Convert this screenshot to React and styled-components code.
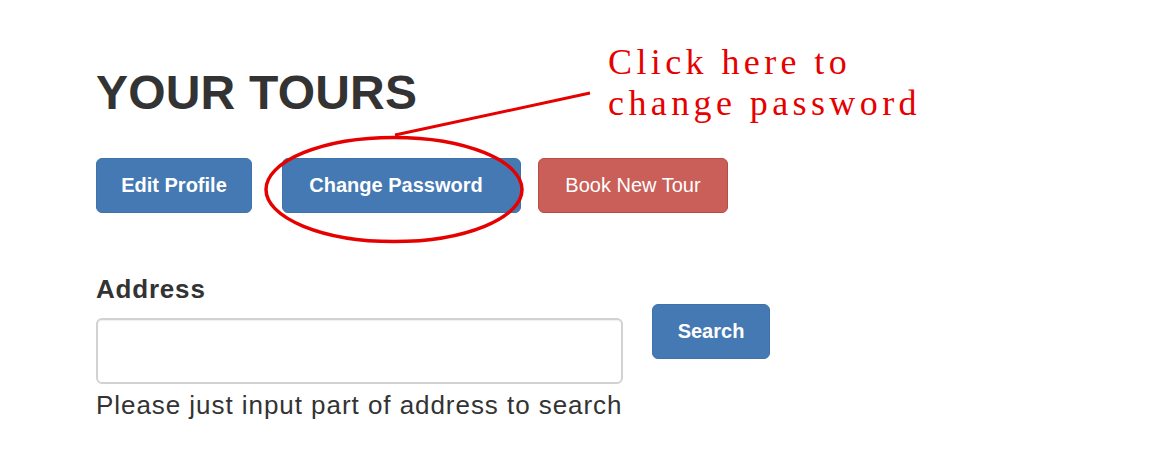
import styled, { createGlobalStyle } from 'styled-components';

const GlobalStyle = createGlobalStyle`
  html, body {
    margin: 0;
    padding: 0;
    background: #ffffff;
  }
  body {
    font-family: 'Liberation Sans', Arial, sans-serif;
    color: #333333;
  }
`;

const Page = styled.div`
  position: relative;
  width: 1164px;
  height: 450px;
  padding: 66px 0 0 96px;
  box-sizing: border-box;
  overflow: hidden;
`;

const Title = styled.h1`
  margin: 0;
  font-size: 48px;
  line-height: 53px;
  font-weight: 700;
  letter-spacing: 0.2px;
  color: #333333;
`;

const ButtonRow = styled.div`
  display: flex;
  margin-top: 39px;
`;

const Button = styled.button`
  display: inline-flex;
  align-items: center;
  justify-content: center;
  box-sizing: border-box;
  height: 55px;
  width: ${p => p.$w}px;
  margin-left: ${p => p.$gap || 0}px;
  padding: 0 ${p => p.$shift || 0}px 1px 0;
  border-radius: 6px;
  border: 1px solid ${p => (p.$danger ? '#b94a45' : '#3f72aa')};
  background: ${p => (p.$danger ? '#c95f58' : '#4479b3')};
  color: #ffffff;
  font-family: 'Liberation Sans', Arial, sans-serif;
  font-size: 20px;
  font-weight: ${p => (p.$danger ? 400 : 700)};
  cursor: pointer;
`;

const SearchArea = styled.div`
  display: flex;
  align-items: flex-start;
  margin-top: 61px;
`;

const Field = styled.div`
  display: flex;
  flex-direction: column;
  width: 527px;
`;

const Label = styled.label`
  font-size: 26px;
  line-height: 31px;
  font-weight: 700;
  letter-spacing: 0.8px;
  color: #333333;
`;

const Input = styled.input`
  box-sizing: border-box;
  width: 527px;
  height: 66px;
  margin-top: 13px;
  border: 2px solid #d2d2d2;
  border-radius: 6px;
  box-shadow: inset 0 1px 1px rgba(0, 0, 0, 0.06);
  font-size: 24px;
  padding: 0 14px;
  outline: none;
`;

const Help = styled.div`
  margin-top: 6px;
  font-size: 26px;
  line-height: 31px;
  letter-spacing: 0.95px;
  color: #333333;
  white-space: nowrap;
`;

const SearchCol = styled.div`
  margin-left: 29px;
  margin-top: 30px;
`;

const Note = styled.div`
  position: absolute;
  left: 608px;
  top: 42px;
  font-family: 'Liberation Serif', 'Times New Roman', serif;
  font-size: 36px;
  line-height: 41px;
  letter-spacing: 4.4px;
  color: #e60000;
  white-space: nowrap;
`;

const Marks = styled.svg`
  position: absolute;
  left: 0;
  top: 0;
  pointer-events: none;
`;

export default function App() {
  return (
    <>
      <GlobalStyle />
      <Page>
        <Title>YOUR TOURS</Title>
        <ButtonRow>
          <Button $w={156}>Edit Profile</Button>
          <Button $w={239} $gap={30} $shift={11}>Change Password</Button>
          <Button $w={190} $gap={17} $danger>Book New Tour</Button>
        </ButtonRow>
        <SearchArea>
          <Field>
            <Label htmlFor="address">Address</Label>
            <Input id="address" type="text" />
            <Help>Please just input part of address to search</Help>
          </Field>
          <SearchCol>
            <Button $w={118}>Search</Button>
          </SearchCol>
        </SearchArea>

        <Note>
          Click here to
          <br />
          change password
        </Note>
        <Marks width="1164" height="450" viewBox="0 0 1164 450">
          <line x1="395" y1="135" x2="590" y2="93" stroke="#e60000" strokeWidth="3" />
          <ellipse cx="394" cy="189.5" rx="128" ry="52" fill="none" stroke="#e60000" strokeWidth="3.5" />
        </Marks>
      </Page>
    </>
  );
}
